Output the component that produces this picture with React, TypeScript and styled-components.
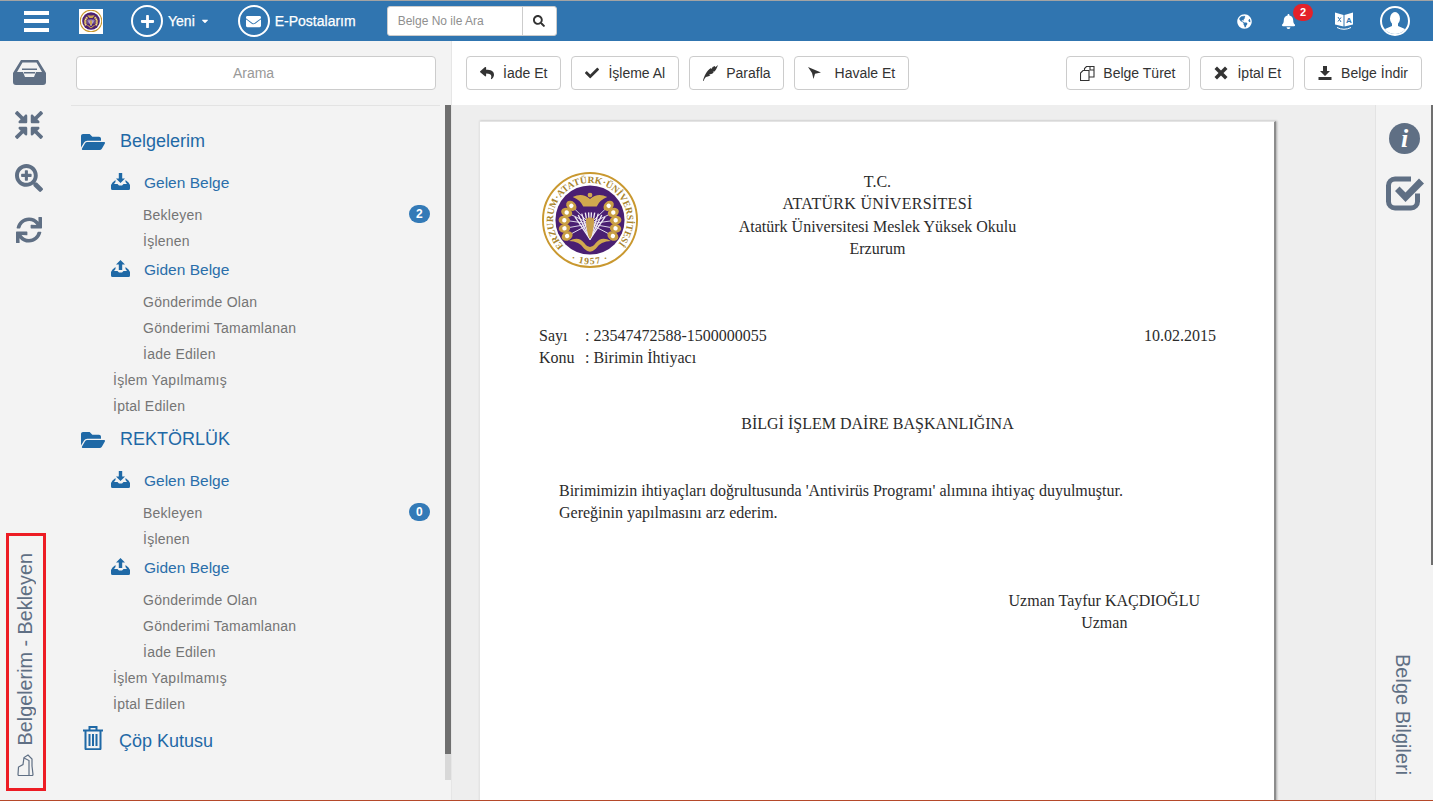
import React from "react";
import styled, { createGlobalStyle } from "styled-components";
import {
  FaCaretDown, FaPlus, FaEnvelope, FaSearch, FaGlobeAmericas, FaBell, FaFolderOpen,
  FaCompressArrowsAlt, FaSearchPlus, FaSync, FaReply, FaCheck,
} from "react-icons/fa";

const Global = createGlobalStyle`
  html, body { margin: 0; padding: 0; background: #fff; overflow: hidden; }
  body { font-family: "Liberation Sans", Arial, sans-serif; font-size: 14px; color: #333; }
  * { box-sizing: border-box; }
`;

const Page = styled.div`
  height: 801px; display: flex; flex-direction: column;
  border-bottom: 1px solid #b5492a;
`;
const Nav = styled.header`
  height: 41px; flex: none; display: flex; align-items: center;
  background: #3075b0; border-top: 1px solid #a3a3a3; color: #fff;
`;
const Burger = styled.div`
  width: 25px; height: 21px; margin-left: 24px; display: flex; flex-direction: column; justify-content: space-between;
  & > i { display: block; height: 4px; background: #fff; }
`;
const NavLogo = styled.div`
  width: 24px; height: 25px; margin-left: 30px; background: #fff;
  display: flex; align-items: center; justify-content: center;
`;
const NavAction = styled.div<{ $ml: number }>`
  display: flex; align-items: center; margin-left: ${(p) => p.$ml}px;
  font-size: 14px; font-weight: 400; -webkit-text-stroke: 0.25px #fff;
`;
const RoundIcon = styled.span`
  width: 32px; height: 32px; border-radius: 50%; border: 2px solid #fff; margin-right: 5px;
  display: flex; align-items: center; justify-content: center; font-size: 15px;
  -webkit-text-stroke: 0;
`;
const Caret = styled.span`
  margin-left: 5px; display: flex; font-size: 10px;
`;
const SearchGroup = styled.div`
  width: 170px; height: 30px; margin-left: 31px; display: flex; background: #fff;
  border-radius: 3px; border: 1px solid #ccc; color: #999;
`;
const SearchText = styled.div`
  flex: 1; font-size: 12px; line-height: 28px; padding-left: 10px; color: #8f8f8f; border-right: 1px solid #ccc;
`;
const SearchButton = styled.div`
  width: 33px; display: flex; align-items: center; justify-content: center; color: #333; font-size: 12px;
`;
const NavRight = styled.div`
  margin-left: auto; display: flex; align-items: center; padding-right: 23px;
`;
const NavIcon = styled.span<{ $ml: number; $up?: number }>`
  position: relative; display: flex; margin-left: ${(p) => p.$ml}px; color: #fff; font-size: 15px;
  margin-top: ${(p) => -(p.$up ?? 0)}px;
`;
const RedBadge = styled.span`
  position: absolute; left: 12px; top: -10px; width: 20px; height: 17px; border-radius: 9px;
  background: #e3222a; color: #fff; font-size: 11px; font-weight: 700; line-height: 17px; text-align: center;
`;
const Body = styled.div`
  flex: 1; min-height: 0; display: flex;
`;
const Rail = styled.aside`
  width: 60px; flex: none; background: #f3f3f3; display: flex; flex-direction: column; color: #5f6f84;
  padding-bottom: 9px;
`;
const RailIcon = styled.div<{ $h: number }>`
  height: ${(p) => p.$h}px; display: flex; align-items: center; justify-content: center; padding-right: 2px;
`;
const MarkedBox = styled.div`
  margin: auto 0 0 6px; width: 40px; height: 258px; border: 3px solid #ed1c24;
  display: flex; flex-direction: column; align-items: center; padding-top: 17px; padding-right: 2px;
`;
const VerticalLeft = styled.div`
  writing-mode: vertical-rl; transform: rotate(180deg); font-size: 19.8px; line-height: 24px; color: #5f6f84; white-space: nowrap;
`;
const MarkedIcon = styled.div`
  margin-top: 9px; display: flex;
`;
const Sidebar = styled.nav`
  width: 392px; flex: none; background: #f3f3f3; display: flex; flex-direction: column;
  border-right: 1px solid #e6e6e6;
`;
const SideHead = styled.div`
  height: 64px; flex: none; padding: 15px 15px 0 16px;
`;
const SearchBox = styled.div`
  height: 34px; background: #fff; border: 1px solid #ccc; border-radius: 4px; text-align: center;
  line-height: 32px; color: #999; font-size: 14px; padding-right: 5px;
`;
const SideBody = styled.div`
  flex: 1; min-height: 0; display: flex; align-items: flex-start;
`;
const Tree = styled.div`
  flex: 1; min-width: 0; margin-left: 11px; padding-top: 19px; margin-right: 5px; border-top: 1px solid #e3e3e3;
`;
const ScrollTrack = styled.div`
  width: 6px; height: 675px; background: #d8d8d8; flex: none;
`;
const ScrollThumb = styled.div<{ $h: number }>`
  height: ${(p) => p.$h}px; background: #6f6f6f;
`;
const GroupRow = styled.div<{ $mt?: number }>`
  height: 33px; margin-top: ${(p) => p.$mt ?? 0}px; display: flex; align-items: center; color: #1f69a6; font-size: 18px; padding-left: 10px;
`;
const GroupIcon = styled.span`
  width: 39px; display: flex; font-size: 24px; color: #1f69a6;
`;
const TrashSlot = styled.span`
  width: 38px; display: flex; margin-top: -8px; padding-left: 2px;
`;
const SubRow = styled.div<{ $mt?: number }>`
  height: 32px; margin-top: ${(p) => p.$mt ?? 0}px; display: flex; align-items: center; color: #2a6eaa; font-size: 15.5px; padding-left: 40px;
`;
const SubIcon = styled.span`
  width: 33px; display: flex; color: #1f69a6; margin-top: -4px;
`;
const ItemRow = styled.div<{ $indent: number; $mt?: number }>`
  height: 26px; margin-top: ${(p) => p.$mt ?? 0}px; display: flex; align-items: center; justify-content: space-between;
  padding-left: ${(p) => p.$indent}px; color: #757575; font-size: 14px; letter-spacing: 0.25px; padding-right: 10px;
`;
const CountBadge = styled.span`
  width: 21px; height: 18px; border-radius: 9px; background: #337ab7; color: #fff; font-size: 12px; font-weight: 700;
  line-height: 18px; text-align: center; margin-top: -2px;
`;
const Main = styled.main`
  flex: 1; min-width: 0; display: flex; flex-direction: column;
`;
const Toolbar = styled.div`
  height: 64px; flex: none; background: #fff; display: flex; padding: 15px 11px 0 14px; gap: 10px;
`;
const Push = styled.div`
  margin-left: auto;
`;
const Btn = styled.div<{ $pr?: number }>`
  height: 34px; border: 1px solid #ccc; border-radius: 4px; background: #fff; color: #333;
  padding: 0 ${(p) => p.$pr ?? 12}px 0 13px;
  display: flex; align-items: center; font-size: 14px; white-space: nowrap;
`;
const BtnIcon = styled.span<{ $slot: number }>`
  width: ${(p) => p.$slot}px; display: flex; font-size: 14px; color: #333;
`;
const Content = styled.div`
  flex: 1; min-height: 0; display: flex;
`;
const Viewer = styled.section`
  width: 924px; flex: none; background: #eee; padding: 16px 0 0 27px; overflow: hidden; border-right: 1px solid #e3e3e3;
`;
const Paper = styled.article`
  width: 797px; height: 760px; background: #fff; border: 1px solid #e4e4e4; border-right: 2px solid #8c8c8c;
  box-shadow: 1px 0 2px #aaa; padding: 49px 58px 0 59px;
  font-family: "Liberation Serif", "Times New Roman", serif; font-size: 16px; line-height: 22px; color: #2b2b2b;
  display: flex; flex-direction: column;
`;
const DocHead = styled.div`
  display: grid; grid-template-columns: 1fr auto 1fr; height: 154px;
`;
const DocLogo = styled.div`
  margin: 1px 0 0 3px;
`;
const DocCenter = styled.div`
  text-align: center;
`;
const DocTitle = styled.div`
  letter-spacing: 0.3px;
`;
const DocOrg = styled.div`
  margin-top: 1px;
`;
const MetaRow = styled.div`
  display: flex; justify-content: space-between;
`;
const MetaLabel = styled.span`
  display: inline-block; width: 46px;
`;
const DocHeading = styled.div`
  margin-top: 44px; text-align: center;
`;
const DocPara = styled.p`
  margin: 45px 0 0 20px;
`;
const Signature = styled.div`
  margin: 66px 16px 0 0; align-self: flex-end; text-align: center;
`;
const RightRail = styled.aside`
  flex: 1; background: #f3f3f3; display: flex; flex-direction: column; align-items: center; position: relative; padding: 18px 0 25px;
  color: #5f6f84;
`;
const RightThumb = styled.div`
  position: absolute; right: 0; top: 0; width: 2px; height: 460px; background: #6f6f6f;
`;
const InfoDot = styled.div`
  width: 31px; height: 31px; border-radius: 50%; background: #5f6f84; color: #fff; text-align: center;
  font: italic 700 26px/31px "Liberation Serif", serif;
`;
const CheckWrap = styled.div`
  margin-top: 22px; display: flex;
`;
const VerticalRight = styled.div`
  margin-top: auto; writing-mode: vertical-rl; font-size: 20px; line-height: 24px; color: #5f6f84; white-space: nowrap; margin-right: 3px;
`;

const FEATHERS = [-118, -100, -82, -64, -46, 46, 64, 82, 100, 118];
const STRANDS = [-34, -26, -18, -10, -3, 3, 10, 18, 26, 34];

const Seal = ({ size, id, text = true }: { size: number; id: string; text?: boolean }) => (
  <svg width={size} height={size} viewBox="0 0 100 100">
    <circle cx="50" cy="50" r="49" fill="#fff" stroke="#c9982f" strokeWidth={text ? 2 : 5} />
    <defs>
      <path id={`${id}t`} d="M 22.8 77.2 A 38.5 38.5 0 1 1 77.2 77.2" fill="none" />
      <path id={`${id}b`} d="M 20 85 A 46 46 0 0 0 80 85" fill="none" />
    </defs>
    {text ? (
      <text fontFamily="'Liberation Serif', serif" fontSize="10" fontWeight="700" fill="#a8842c" textLength="178" lengthAdjust="spacing">
        <textPath href={`#${id}t`}>ERZURUM·ATATÜRK·ÜNİVERSİTESİ</textPath>
      </text>
    ) : null}
    {text ? (
      <text fontFamily="'Liberation Serif', serif" fontSize="10" fontWeight="700" fill="#a8842c" letterSpacing="1.2" textAnchor="middle">
        <textPath href={`#${id}b`} startOffset="50%">· 1957 ·</textPath>
      </text>
    ) : null}
    <circle cx="50" cy="50" r={text ? 36 : 40} fill="#4a1f72" />
    {FEATHERS.map((a) => (
      <g key={a} transform={`rotate(${a} 50 54)`}>
        <line x1="50" y1="54" x2="50" y2="30" stroke="#e7e2ef" strokeWidth="0.9" />
        <ellipse cx="50" cy="27" rx="4.6" ry="6" fill="#caa044" />
        <circle cx="50" cy="27" r="2.3" fill="#fff" />
      </g>
    ))}
    {STRANDS.map((a) => (
      <line key={a} x1="50" y1="70" x2="50" y2="42" stroke="#f1edf6" strokeWidth="1.400" transform={`rotate(${a} 50 70)`} />
    ))}
    {[-9, -4, 0, 4, 9].map((a) => (
      <ellipse key={a} cx="50" cy="58" rx="1.800" ry="11" fill="#c9a04a" transform={`rotate(${a} 50 69)`} />
    ))}
    <path d="M32 26 Q42 21 50 28 Q58 21 68 26 Q60 29 57 36 L43 36 Q40 29 32 26 Z" fill="#d1a94e" />
    <circle cx="50" cy="24" r="2.500" fill="#d1a94e" />
    <path d="M28 72 Q38 66 44 74 Q50 82 56 74 Q62 66 72 72 Q61 72 56 80 Q50 86 44 80 Q39 72 28 72 Z" fill="#d1a94e" />
  </svg>
);

const InboxIcon = () => (
  <svg width="33" height="25" viewBox="0 0 33 25" fill="#5f6f84">
    <path d="M8 0h17l8 13v9a3 3 0 0 1-3 3H3a3 3 0 0 1-3-3v-9L8 0Zm1.500 2.500L4 12h6l2 5h9l2-5h6l-5.500-9.500h-14Z" fillRule="evenodd" />
    <rect x="9" y="8.500" width="15" height="1.500" />
    <rect x="11" y="12" width="11" height="1.500" />
  </svg>
);
const TrayArrow = ({ up }: { up?: boolean }) => (
  <svg width="19" height="17" viewBox="0 0 19 17" fill="currentColor">
    {up ? <path d="M9.500 0 14 4.500h-2.800v5.500H7.800V4.500H5z" /> : <path d="M7.800 0h3.400v5.500H14L9.500 10 5 5.500h2.800z" />}
    <path d="M1.500 9.500 4.500 7v2L3 11h3.500l1.500 1.500h3L12.500 11H16l-1.500-2V7l3 2.500L19 12v3.500a1.500 1.500 0 0 1-1.500 1.500h-16A1.500 1.500 0 0 1 0 15.500V12z" />
  </svg>
);
const TrashIcon = () => (
  <svg width="20" height="24" viewBox="0 0 20 24" fill="none" stroke="#1f69a6" strokeWidth="2">
    <path d="M0 4.500h20M6.500 4V1h7v3M2.500 5v17.500c0 .5.300.8.800.8h13.400c.5 0 .8-.3.800-.8V5" />
    <path d="M6.500 8v12M10 8v12M13.500 8v12" />
  </svg>
);
const QuillIcon = () => (
  <svg width="15" height="16" viewBox="0 0 15 16" fill="#333">
    <path d="M0 16C1 11 4 5 8 3l.8 1L9.500 2 12 1l.3 1.200L15 0c-1 3-2 5-3.500 6.500l-1.800.3 1 .7C9 9 7.500 9.300 6 9.500l1.400.8C5.500 11.500 4 11.800 3 12 2 13 1 14.500 .6 16z" />
  </svg>
);
const PlaneIcon = () => (
  <svg width="13" height="12" viewBox="0 0 13 12" fill="#333">
    <path d="M0 0l13 5.500-6 1.300L5.500 12 4 6z" />
  </svg>
);
const CopyIcon = () => (
  <svg width="15" height="15" viewBox="0 0 15 15" fill="none" stroke="#333" strokeWidth="1.100">
    <path d="M4.500 4.500V2.500l2-2h4l3.500 0v10.500H9" />
    <path d="M3 4.500h6v10H.500V7z" fill="#fff" />
    <path d="M10 .5V4h4" />
  </svg>
);
const RemoveIcon = () => (
  <svg width="14" height="14" viewBox="0 0 14 14" fill="#333">
    <path d="M3 .5 7 4.500 11 .5 13.500 3 9.500 7l4 4L11 13.500l-4-4-4 4L.5 11l4-4-4-4z" />
  </svg>
);
const DownloadIcon = () => (
  <svg width="14" height="14" viewBox="0 0 14 14" fill="#333">
    <path d="M5 0h4v5h3L7 10 2 5h3z" />
    <rect x="0.500" y="11" width="13" height="3" />
  </svg>
);
const TranslateIcon = () => (
  <svg width="18" height="20" viewBox="0 0 18 20" fill="#fff">
    <path d="M0 2.500l8.500 2.500V16.500L0 14.500z" />
    <path d="M9.500 5 18 2.500v12l-8.500 2z" />
    <path d="M2 17.500Q9 21 16 17.500" fill="none" stroke="#fff" strokeWidth="1" />
    <path d="M3 7l3 5M6 7.500l-3 4" stroke="#3075b0" strokeWidth="1" />
    <text x="11" y="12.500" fontSize="8" fontWeight="700" fontFamily="'Liberation Sans', sans-serif" fill="#3075b0">A</text>
  </svg>
);
const UserIcon = () => (
  <svg width="30" height="30" viewBox="0 0 30 30">
    <defs><clipPath id="uc"><circle cx="15" cy="15" r="13" /></clipPath></defs>
    <circle cx="15" cy="15" r="14" fill="none" stroke="#fff" strokeWidth="2" />
    <g clipPath="url(#uc)" fill="#fff">
      <ellipse cx="15" cy="12.500" rx="5" ry="6.500" />
      <path d="M12 17h6v3l7 3v7H5v-7l7-3z" />
    </g>
  </svg>
);
const CheckSquare = () => (
  <svg width="38" height="35" viewBox="0 0 38 35" fill="none">
    <path d="M25 3H9a6.500 6.500 0 0 0-6.500 6.500v16A6.500 6.500 0 0 0 9 32h16a6.500 6.500 0 0 0 6.500-6.500v-8" stroke="#5f6f84" strokeWidth="5" />
    <path d="M9 15l4.500-4.500 6 6L33 2.500 38 7.500 19.500 26z" fill="#5f6f84" />
  </svg>
);
const DocShape = () => (
  <svg width="17" height="22" viewBox="0 0 17 22" fill="none" stroke="#5f6f84" strokeWidth="1.200">
    <path d="M1 20.500q0 1 1 1h13q1 0 1-1L15 12V5L11 1 7 3.500 6 10.500 1.500 13z" />
    <path d="M7 4l5 2.500V21" />
  </svg>
);

const Tree1 = ({ title, count, first }: { title: string; count: number; first?: boolean }) => (
  <>
    <GroupRow $mt={first ? 0 : 4}>
      <GroupIcon><FaFolderOpen /></GroupIcon>
      {title}
    </GroupRow>
    <SubRow $mt={9}><SubIcon><TrayArrow /></SubIcon>Gelen Belge</SubRow>
    <ItemRow $indent={72} $mt={3}>Bekleyen<CountBadge>{count}</CountBadge></ItemRow>
    <ItemRow $indent={72}>İşlenen</ItemRow>
    <SubRow><SubIcon><TrayArrow up /></SubIcon>Giden Belge</SubRow>
    <ItemRow $indent={72} $mt={3}>Gönderimde Olan</ItemRow>
    <ItemRow $indent={72}>Gönderimi Tamamlanan</ItemRow>
    <ItemRow $indent={72}>İade Edilen</ItemRow>
    <ItemRow $indent={42}>İşlem Yapılmamış</ItemRow>
    <ItemRow $indent={42}>İptal Edilen</ItemRow>
  </>
);

export default function App() {
  return (
    <Page>
      <Global />
      <Nav>
        <Burger><i /><i /><i /></Burger>
        <NavLogo><Seal size={22} id="navseal" text={false} /></NavLogo>
        <NavAction $ml={28}>
          <RoundIcon><FaPlus /></RoundIcon>Yeni<Caret><FaCaretDown /></Caret>
        </NavAction>
        <NavAction $ml={28}>
          <RoundIcon><FaEnvelope /></RoundIcon>E-Postalarım
        </NavAction>
        <SearchGroup>
          <SearchText>Belge No ile Ara</SearchText>
          <SearchButton><FaSearch /></SearchButton>
        </SearchGroup>
        <NavRight>
          <NavIcon $ml={0}><FaGlobeAmericas /></NavIcon>
          <NavIcon $ml={29}><FaBell /><RedBadge>2</RedBadge></NavIcon>
          <NavIcon $ml={39} $up={2}><TranslateIcon /></NavIcon>
          <NavIcon $ml={27}><UserIcon /></NavIcon>
        </NavRight>
      </Nav>
      <Body>
        <Rail>
          <RailIcon $h={63}><InboxIcon /></RailIcon>
          <RailIcon $h={42}><FaCompressArrowsAlt size={28} /></RailIcon>
          <RailIcon $h={64}><FaSearchPlus size={28} /></RailIcon>
          <RailIcon $h={40}><FaSync size={26} /></RailIcon>
          <MarkedBox>
            <VerticalLeft>Belgelerim - Bekleyen</VerticalLeft>
            <MarkedIcon><DocShape /></MarkedIcon>
          </MarkedBox>
        </Rail>
        <Sidebar>
          <SideHead><SearchBox>Arama</SearchBox></SideHead>
          <SideBody>
            <Tree>
              <Tree1 title="Belgelerim" count={2} first />
              <Tree1 title="REKTÖRLÜK" count={0} />
              <GroupRow $mt={8}>
                <TrashSlot><TrashIcon /></TrashSlot>
                Çöp Kutusu
              </GroupRow>
            </Tree>
            <ScrollTrack><ScrollThumb $h={649} /></ScrollTrack>
          </SideBody>
        </Sidebar>
        <Main>
          <Toolbar>
            <Btn $pr={13}><BtnIcon $slot={23}><FaReply /></BtnIcon>İade Et</Btn>
            <Btn $pr={13}><BtnIcon $slot={23}><FaCheck /></BtnIcon>İşleme Al</Btn>
            <Btn><BtnIcon $slot={23}><QuillIcon /></BtnIcon>Parafla</Btn>
            <Btn $pr={13}><BtnIcon $slot={27}><PlaneIcon /></BtnIcon>Havale Et</Btn>
            <Push />
            <Btn $pr={14}><BtnIcon $slot={23}><CopyIcon /></BtnIcon>Belge Türet</Btn>
            <Btn><BtnIcon $slot={23}><RemoveIcon /></BtnIcon>İptal Et</Btn>
            <Btn $pr={13}><BtnIcon $slot={23}><DownloadIcon /></BtnIcon>Belge İndir</Btn>
          </Toolbar>
          <Content>
            <Viewer>
              <Paper>
                <DocHead>
                  <DocLogo><Seal size={96} id="docseal" /></DocLogo>
                  <DocCenter>
                    <div>T.C.</div>
                    <DocTitle>ATATÜRK ÜNİVERSİTESİ</DocTitle>
                    <DocOrg>Atatürk Üniversitesi Meslek Yüksek Okulu</DocOrg>
                    <div>Erzurum</div>
                  </DocCenter>
                  <div />
                </DocHead>
                <MetaRow>
                  <span><MetaLabel>Sayı</MetaLabel>: 23547472588-1500000055</span>
                  <span>10.02.2015</span>
                </MetaRow>
                <MetaRow>
                  <span><MetaLabel>Konu</MetaLabel>: Birimin İhtiyacı</span>
                </MetaRow>
                <DocHeading>BİLGİ İŞLEM DAİRE BAŞKANLIĞINA</DocHeading>
                <DocPara>
                  Birimimizin ihtiyaçları doğrultusunda 'Antivirüs Programı' alımına ihtiyaç duyulmuştur.
                  <br />
                  Gereğinin yapılmasını arz ederim.
                </DocPara>
                <Signature>
                  <div>Uzman Tayfur KAÇDIOĞLU</div>
                  <div>Uzman</div>
                </Signature>
              </Paper>
            </Viewer>
            <RightRail>
              <RightThumb />
              <InfoDot>i</InfoDot>
              <CheckWrap><CheckSquare /></CheckWrap>
              <VerticalRight>Belge Bilgileri</VerticalRight>
            </RightRail>
          </Content>
        </Main>
      </Body>
    </Page>
  );
}
